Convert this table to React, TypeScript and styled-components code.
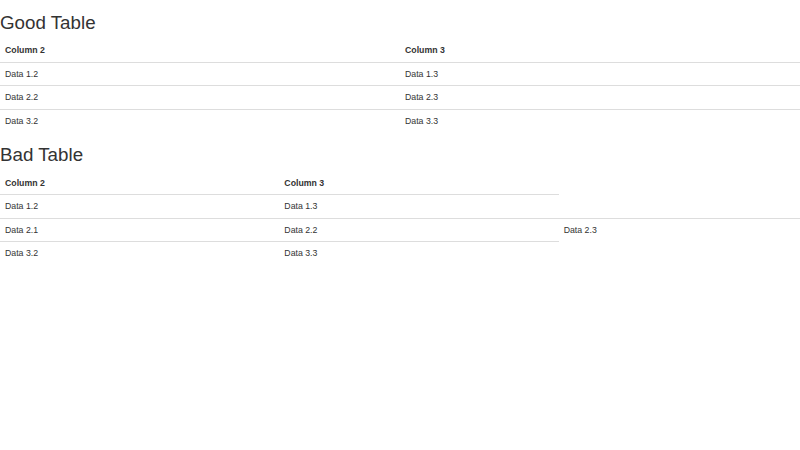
import { FC } from 'react';
import styled, { createGlobalStyle } from 'styled-components';

const GlobalStyle = createGlobalStyle`
	body {
		margin: 0;
		background: #fff;
		color: #333;
		font-family: 'Liberation Sans', Arial, sans-serif;
		font-size: 8.75px;
		line-height: 12.5px;
	}
`;

type Row = string[];

const goodRows: Row[] = [
	['Data 1.2', 'Data 1.3'],
	['Data 2.2', 'Data 2.3'],
	['Data 3.2', 'Data 3.3'],
];

const badRows: Row[] = [
	['Data 1.2', 'Data 1.3'],
	['Data 2.1', 'Data 2.2', 'Data 2.3'],
	['Data 3.2', 'Data 3.3'],
];

const DataTable: FC<{ rows: Row[] }> = ({ rows }) => (
	<Table>
		<thead>
			<tr>
				<HeadCell>Column 2</HeadCell>
				<HeadCell>Column 3</HeadCell>
			</tr>
		</thead>
		<tbody>
			{rows.map((row, i) => (
				<tr key={i}>
					{row.map((cell) => (
						<BodyCell key={cell}>{cell}</BodyCell>
					))}
				</tr>
			))}
		</tbody>
	</Table>
);

const App: FC = () => (
	<Page>
		<GlobalStyle />
		<Title>Good Table</Title>
		<DataTable rows={goodRows} />
		<Title>Bad Table</Title>
		<DataTable rows={badRows} />
	</Page>
);

const Page = styled.div`
	width: 800px;
`;

const Title = styled.h2`
	font-size: 18.75px;
	font-weight: 500;
	line-height: 1.1;
	margin: 12.5px 0 6.25px;
	color: #333;
`;

const Table = styled.table`
	width: 100%;
	max-width: 100%;
	border-collapse: collapse;
	border-spacing: 0;
	margin-bottom: 12.5px;
`;

const HeadCell = styled.th`
	text-align: left;
	font-weight: bold;
	padding: 5px;
	vertical-align: bottom;
	border-bottom: 1.25px solid #ddd;
`;

const BodyCell = styled.td`
	padding: 5px;
	vertical-align: top;
	border-top: 0.625px solid #ddd;
`;

export default App;
